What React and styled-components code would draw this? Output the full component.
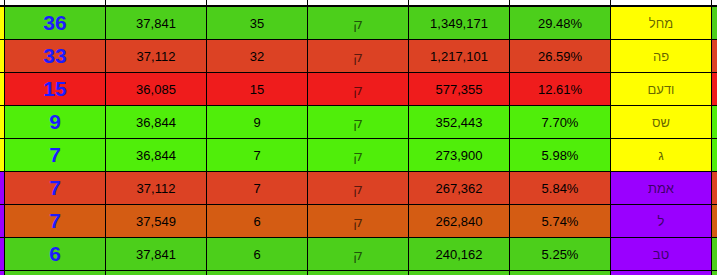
import React from 'react';
import styled, { createGlobalStyle } from 'styled-components';

const GlobalStyle = createGlobalStyle`
  html, body {
    margin: 0;
    padding: 0;
    background: #ffffff;
  }
  body {
    font-family: "Liberation Sans", Arial, sans-serif;
  }
`;

const colors = {
  green: '#4ccf1b',
  lime: '#50ee0a',
  brick: '#dc4224',
  red: '#ef1c1c',
  orange: '#d45c13',
  yellow: '#ffff00',
  purple: '#9a00ff',
};

const rows = [
  { seats: '36', avg: '37,841', base: '35', votes: '1,349,171', pct: '29.48%', name: 'מחל', row: 'green', tag: 'yellow' },
  { seats: '33', avg: '37,112', base: '32', votes: '1,217,101', pct: '26.59%', name: 'פה', row: 'brick', tag: 'yellow' },
  { seats: '15', avg: '36,085', base: '15', votes: '577,355', pct: '12.61%', name: 'ודעם', row: 'red', tag: 'yellow' },
  { seats: '9', avg: '36,844', base: '9', votes: '352,443', pct: '7.70%', name: 'שס', row: 'lime', tag: 'yellow' },
  { seats: '7', avg: '36,844', base: '7', votes: '273,900', pct: '5.98%', name: 'ג', row: 'lime', tag: 'yellow' },
  { seats: '7', avg: '37,112', base: '7', votes: '267,362', pct: '5.84%', name: 'אמת', row: 'brick', tag: 'purple' },
  { seats: '7', avg: '37,549', base: '6', votes: '262,840', pct: '5.74%', name: 'ל', row: 'orange', tag: 'purple' },
  { seats: '6', avg: '37,841', base: '6', votes: '240,162', pct: '5.25%', name: 'טב', row: 'green', tag: 'purple' },
];

const Viewport = styled.div`
  width: 717px;
  height: 275px;
  overflow: hidden;
`;

const Sheet = styled.div`
  display: flex;
  flex-direction: column;
  gap: 1px;
  background: #000;
  width: 760px;
`;

const Row = styled.div`
  display: grid;
  grid-template-columns: 4px repeat(7, 100px) 40px;
  column-gap: 1px;
  height: ${({ $h }) => $h || 32}px;
  margin-bottom: ${({ $extra }) => $extra || 0}px;
`;

const Cell = styled.div`
  background: ${({ $bg }) => colors[$bg] || '#ffffff'};
  display: flex;
  align-items: center;
  justify-content: center;
  overflow: hidden;
  font-size: 13px;
  color: #000;
  white-space: nowrap;
`;

const Seats = styled(Cell)`
  font-size: 21px;
  font-weight: bold;
  color: #1c1cff;
`;

const Faded = styled(Cell)`
  color: rgba(0, 0, 0, 0.62);
`;

const Mark = styled(Faded)`
  font-family: "DejaVu Sans", sans-serif;
  font-size: 14px;
  padding-top: 2px;
`;

const App = () => {
  return (
    <Viewport>
      <GlobalStyle />
      <Sheet>
        <Row $h={5} $extra={1}>
          {Array.from({ length: 9 }).map((_, i) => (
            <Cell key={i} />
          ))}
        </Row>
        {rows.map((r, i) => (
          <Row key={i}>
            <Cell $bg={r.tag} />
            <Seats $bg={r.row}>{r.seats}</Seats>
            <Cell $bg={r.row}>{r.avg}</Cell>
            <Cell $bg={r.row}>{r.base}</Cell>
            <Mark $bg={r.row}>ק</Mark>
            <Cell $bg={r.row}>{r.votes}</Cell>
            <Cell $bg={r.row}>{r.pct}</Cell>
            <Faded $bg={r.tag}>{r.name}</Faded>
            <Cell $bg={r.row} />
          </Row>
        ))}
        <Row>
          <Cell $bg="purple" />
          {Array.from({ length: 7 }).map((_, i) => (
            <Cell key={i} $bg={i === 6 ? 'purple' : 'green'} />
          ))}
          <Cell $bg="green" />
        </Row>
      </Sheet>
    </Viewport>
  );
};

export default App;
